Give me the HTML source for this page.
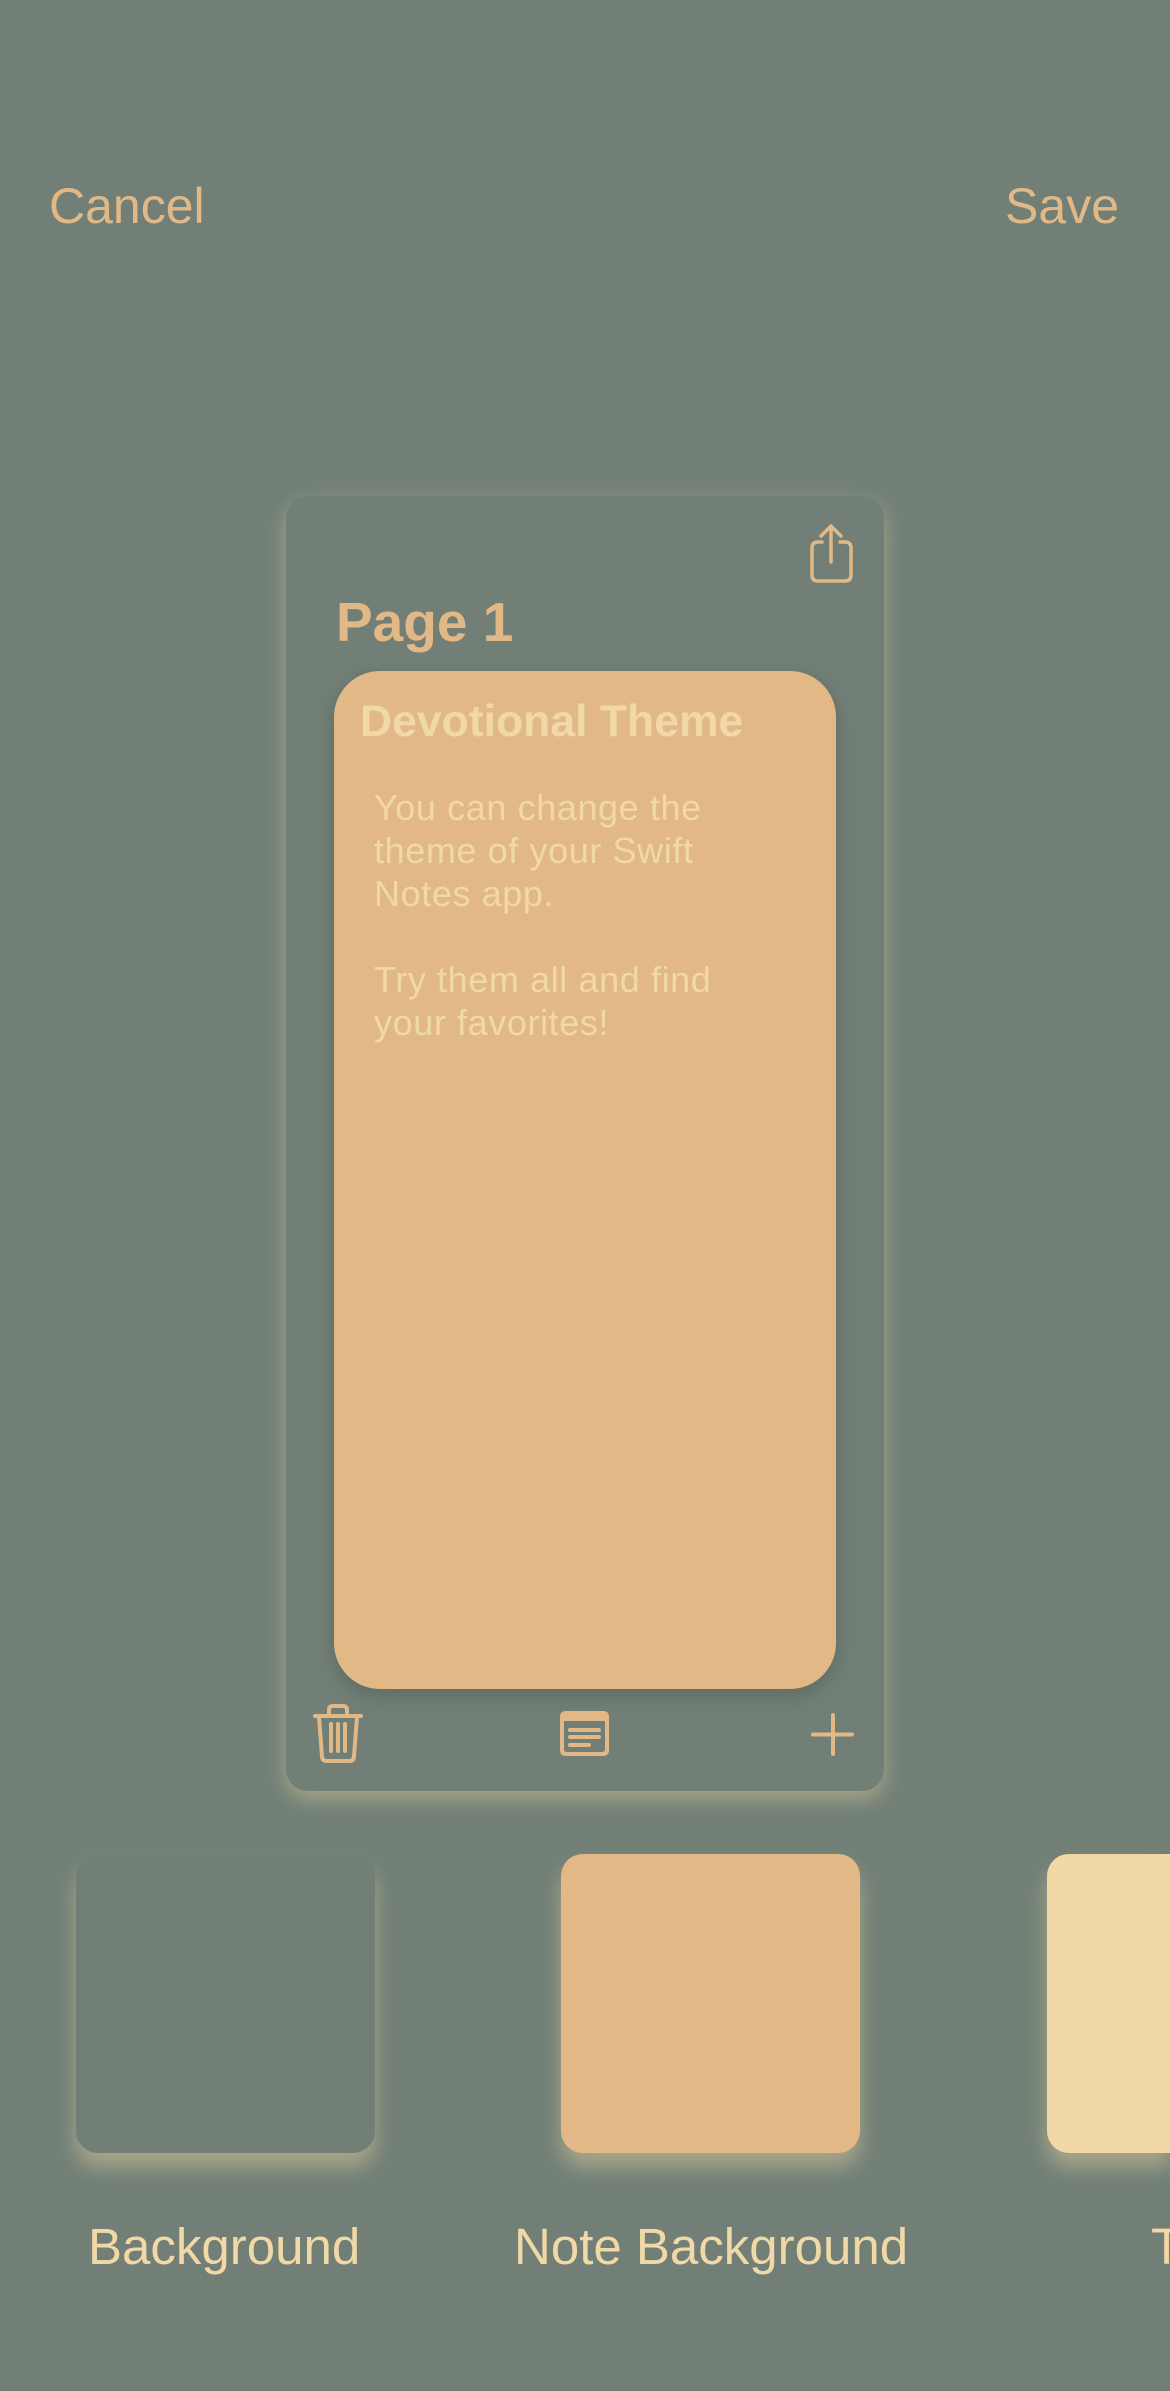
<!DOCTYPE html>
<html><head><meta charset="utf-8"><style>
html,body{margin:0;padding:0}
body{width:1170px;height:2391px;background:#717f76;position:relative;overflow:hidden;font-family:"Liberation Sans",sans-serif}
.wrap{position:absolute;left:0;top:0;width:1170px;height:2391px;overflow:hidden}
.t{position:absolute;white-space:nowrap;line-height:1}
.card{position:absolute;left:286px;top:496px;width:598px;height:1295px;border-radius:22px;background:#717f76;box-shadow:0 8px 22px rgba(240,217,167,0.45)}
.note{position:absolute;left:334px;top:671px;width:502px;height:1018px;border-radius:46px;background:#e2b986;box-shadow:0 6px 18px rgba(60,70,65,0.35)}
.sw{position:absolute;top:1854px;width:299px;height:299px;border-radius:22px;box-shadow:0 14px 22px rgba(240,217,167,0.45)}
</style></head><body><div class="wrap">
<div class="t" style="left:49px;top:181px;font-size:50px;color:#e2b986">Cancel</div>
<div class="t" style="right:51px;top:181px;font-size:50px;color:#e2b986">Save</div>

<div class="card"></div>
<svg style="position:absolute;left:800px;top:515px" width="60" height="75" viewBox="800 515 60 75">
<g fill="none" stroke="#e2b986" stroke-width="3.5" stroke-linecap="round" stroke-linejoin="round">
<path d="M822 542 H818 Q812 542 812 548 V575 Q812 581 818 581 H845 Q851 581 851 575 V548 Q851 542 845 542 H840"/>
<path d="M831 562 V526 M821 536 L831 526 L841 536"/>
</g></svg>
<div class="t" style="left:336px;top:595px;font-size:55px;font-weight:bold;color:#e2b986">Page 1</div>
<div class="note"></div>
<div class="t" style="left:360px;top:700px;font-size:44.5px;font-weight:bold;color:#f0d9a7">Devotional Theme</div>
<div style="position:absolute;left:374px;top:786px;font-size:36px;line-height:43px;color:#f0d9a7;letter-spacing:0.6px">You can change the<br>theme of your Swift<br>Notes app.<br><br>Try them all and find<br>your favorites!</div>

<svg style="position:absolute;left:300px;top:1695px" width="570" height="80" viewBox="300 1695 570 80">
<g fill="none" stroke="#e2b986" stroke-width="4" stroke-linecap="round" stroke-linejoin="round">
<path d="M315 1716 H361"/>
<path d="M329 1716 V1710 Q329 1706 333 1706 H343 Q347 1706 347 1710 V1716"/>
<path d="M319 1717 L322 1756 Q322 1761 327 1761 H349 Q354 1761 354 1756 L357 1717"/>
<path d="M331 1724 V1751 M338 1724 V1751 M345 1724 V1751"/>
<path d="M570 1730 H599 M570 1737 H599 M570 1745 H589"/>
<path d="M833 1715 V1754 M813 1734.5 H852"/>
</g>
<path d="M566 1711 H603 Q609 1711 609 1717 V1750 Q609 1756 603 1756 H566 Q560 1756 560 1750 V1717 Q560 1711 566 1711 Z M564 1721 V1749 Q564 1752 567 1752 H602 Q605 1752 605 1749 V1721 Z" fill="#e2b986" fill-rule="evenodd"/>
</svg>

<div class="sw" style="left:76px;background:#717f76"></div>
<div class="sw" style="left:561px;background:#e2b986"></div>
<div class="sw" style="left:1047px;width:123px;border-radius:22px 0 0 22px;background:#f0d9a7"></div>
<div class="t" style="left:88px;top:2221px;font-size:51px;color:#f0d9a7">Background</div>
<div class="t" style="left:514px;top:2221px;font-size:51px;color:#f0d9a7">Note Background</div>
<div class="t" style="left:1151px;top:2221px;width:19px;overflow:hidden;font-size:51px;color:#f0d9a7">Text</div>
</div></body></html>
